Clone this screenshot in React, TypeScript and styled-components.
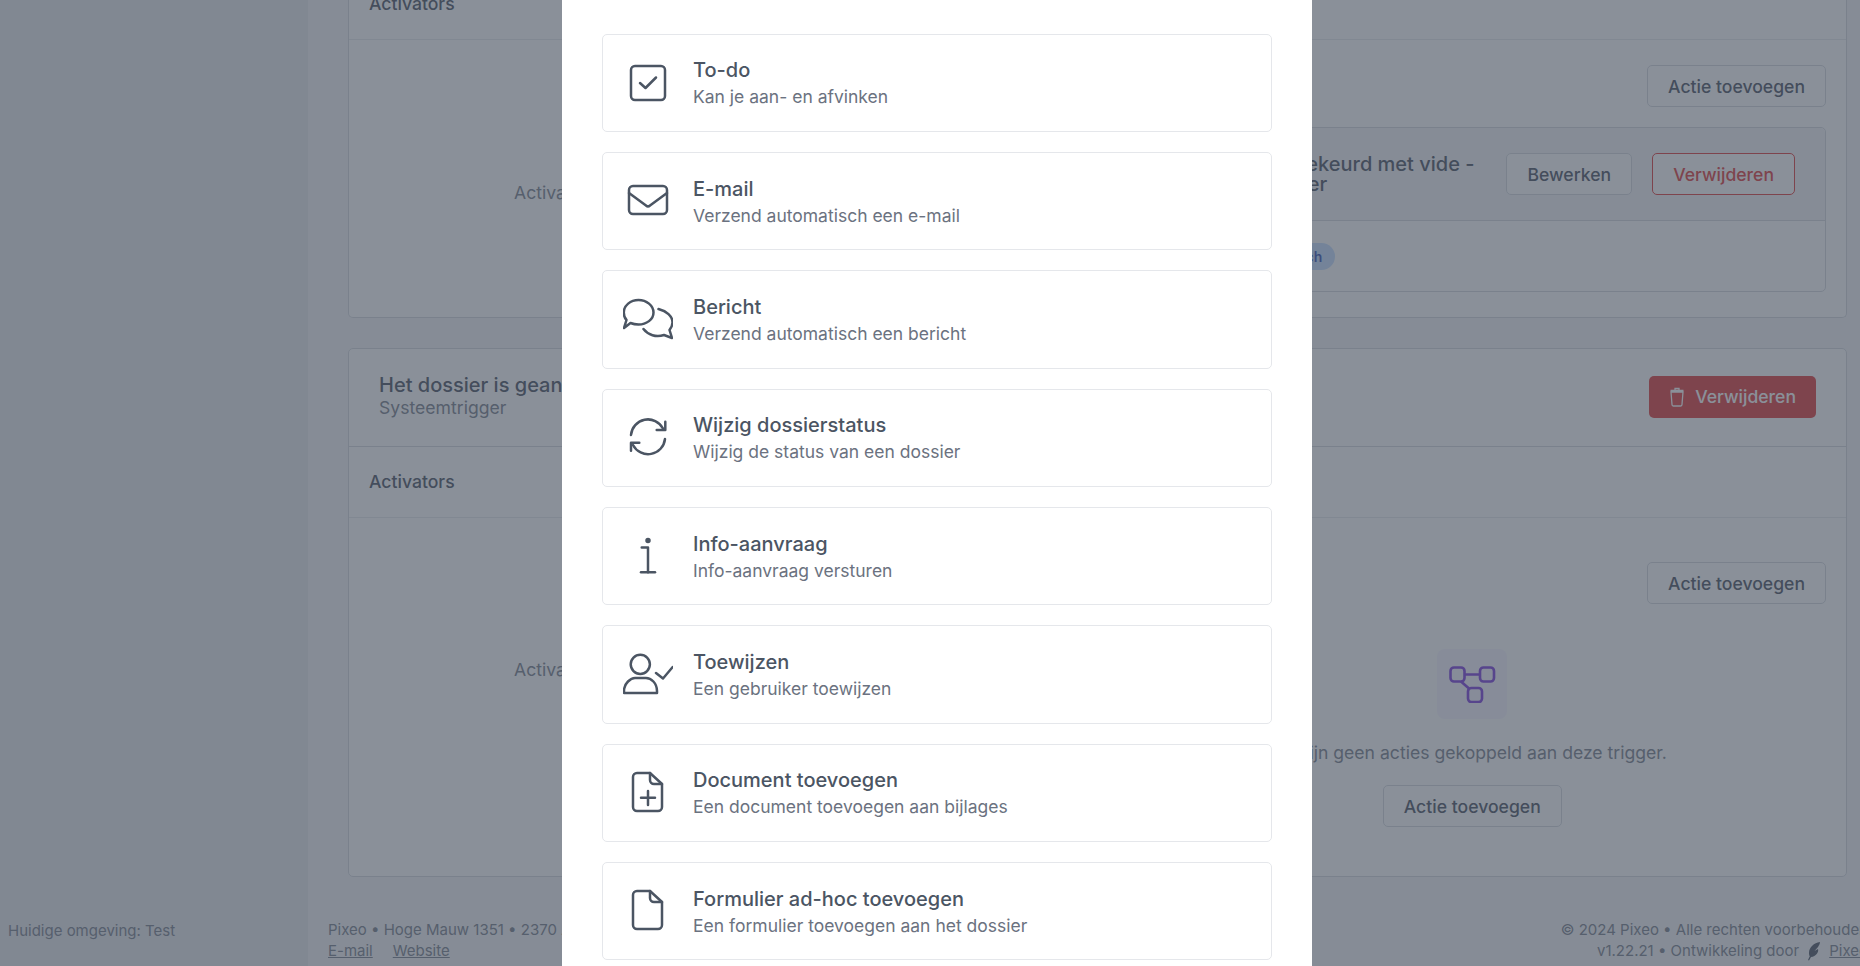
import styled, { createGlobalStyle } from 'styled-components';

const GlobalStyle = createGlobalStyle`
  html, body {
    margin: 0;
    padding: 0;
    height: 100%;
    overflow: hidden;
    background: #f3f4f6;
  }

  body {
    font-family: Inter, "Liberation Sans", sans-serif;
    color: #374151;
  }
`;

interface ActionType {
  title: string;
  description: string;
  icon: React.ReactNode;
}

const actionTypes: ActionType[] = [
  {
    title: 'To-do',
    description: 'Kan je aan- en afvinken',
    icon: (
      <>
        <rect x="8" y="8" width="34" height="34" rx="4" />
        <path d="M17 25l5.500 5L33 19.500" />
      </>
    ),
  },
  {
    title: 'E-mail',
    description: 'Verzend automatisch een e-mail',
    icon: (
      <>
        <rect x="6" y="10" width="38" height="28" rx="4" />
        <path d="M6 17l17 12.500a3 3 0 0 0 4 0L44 17" />
      </>
    ),
  },
  {
    title: 'Bericht',
    description: 'Verzend automatisch een bericht',
    icon: (
      <>
        <path d="M15.500 5C23.500 5 30.500 10.500 30.500 17.500S23.500 29.500 15.500 29.500C12.500 29.500 10 29 7.500 28L1 33l2.500-8C1.500 23 .8 20 .8 17.500.8 10.500 7.500 5 15.500 5Z" />
        <path d="M35.500 14C43.500 16 49.500 21 49.500 27.500c0 3-1.500 5.500-3 7.500l2.500 8-8-3c-8 2.500-16 0-20.500-6" />
      </>
    ),
  },
  {
    title: 'Wijzig dossierstatus',
    description: 'Wijzig de status van een dossier',
    icon: (
      <>
        <path d="M8 22A17 17 0 0 1 40 15.500" />
        <path d="M42.300 8.700V17h-8.600" />
        <path d="M42 26A17 17 0 0 1 10 32" />
        <path d="M8 37.700v-8h8.300" />
      </>
    ),
  },
  {
    title: 'Info-aanvraag',
    description: 'Info-aanvraag versturen',
    icon: (
      <>
        <circle cx="25" cy="9.500" r="1.500" fill="#4b5563" />
        <path d="M18.700 16.500H25v24.700" />
        <path d="M18 41.200h14" />
      </>
    ),
  },
  {
    title: 'Toewijzen',
    description: 'Een gebruiker toewijzen',
    icon: (
      <>
        <circle cx="17.300" cy="14.300" r="9.600" />
        <path d="M1 41c0-8 7-13 11-13h11c5 0 11 5 11 13v2H1Z" />
        <path d="M33 23l7 5.500L49.700 17" />
      </>
    ),
  },
  {
    title: 'Document toevoegen',
    description: 'Een document toevoegen aan bijlages',
    icon: (
      <>
        <path d="M14 5h13l12 11v23a4 4 0 0 1-4 4H14a4 4 0 0 1-4-4V9a4 4 0 0 1 4-4Z" />
        <path d="M27 5v7a4 4 0 0 0 4 4h8" />
        <path d="M18 29.800h14M25 23v14" />
      </>
    ),
  },
  {
    title: 'Formulier ad-hoc toevoegen',
    description: 'Een formulier toevoegen aan het dossier',
    icon: (
      <>
        <path d="M14 5h13l12 11v23a4 4 0 0 1-4 4H14a4 4 0 0 1-4-4V9a4 4 0 0 1 4-4Z" />
        <path d="M27 5v7a4 4 0 0 0 4 4h8" />
      </>
    ),
  },
];

export default function App() {
  return (
    <>
      <GlobalStyle />
      <Page>
        <Sidebar>
          <Environment>Huidige omgeving: Test</Environment>
        </Sidebar>
        <Main>
          <Content>
            <TriggerCard>
              <SectionRow>Activators</SectionRow>
              <Columns>
                <ActivatorColumn $top={141}>Activators</ActivatorColumn>
                <ActionColumn>
                  <ActionsHead>
                    <Button>Actie toevoegen</Button>
                  </ActionsHead>
                  <ActionCard>
                    <ActionCardHead>
                      <ActionCardTitle>
                        Goedgekeurd met vide -<br />
                        manager
                      </ActionCardTitle>
                      <Button>Bewerken</Button>
                      <Button $danger>Verwijderen</Button>
                    </ActionCardHead>
                    <ActionCardBody>
                      <Badge>Automatisch</Badge>
                    </ActionCardBody>
                  </ActionCard>
                </ActionColumn>
              </Columns>
            </TriggerCard>

            <TriggerCard $full>
              <TriggerHead>
                <div>
                  <TriggerTitle>Het dossier is geannuleerd</TriggerTitle>
                  <TriggerType>Systeemtrigger</TriggerType>
                </div>
                <DeleteButton>
                  <svg width="18" height="20" viewBox="0 0 18 20" fill="none" stroke="currentColor" strokeWidth="1.300">
                    <path d="M3 5h12l-1 12.500a1.500 1.500 0 0 1-1.500 1.500h-7A1.500 1.500 0 0 1 4 17.500L3 5ZM2.500 3.500h13M7 3.500V1.500h4v2" />
                  </svg>
                  Verwijderen
                </DeleteButton>
              </TriggerHead>
              <SectionRow>Activators</SectionRow>
              <Columns>
                <ActivatorColumn $top={140}>Activators</ActivatorColumn>
                <ActionColumn $spaced>
                  <ActionsHead>
                    <Button>Actie toevoegen</Button>
                  </ActionsHead>
                  <EmptyState>
                    <EmptyIcon>
                      <svg width="48" height="38" viewBox="0 0 48 38" fill="none" stroke="#6d28d9" strokeWidth="2.600">
                        <rect x="2.500" y="2.500" width="14" height="14" rx="3.500" />
                        <rect x="32" y="2.500" width="14" height="14" rx="3.500" />
                        <rect x="20" y="23" width="14" height="14" rx="3.500" />
                        <path d="M16.500 9.500H32M13 16.500l8 7" />
                      </svg>
                    </EmptyIcon>
                    <EmptyText>Er zijn geen acties gekoppeld aan deze trigger.</EmptyText>
                    <Button>Actie toevoegen</Button>
                  </EmptyState>
                </ActionColumn>
              </Columns>
            </TriggerCard>
          </Content>

          <Footer>
            <div>
              <FooterLine>Pixeo • Hoge Mauw 1351 • 2370 Arendonk</FooterLine>
              <FooterLine>
                <FooterLink>E-mail</FooterLink>
                <FooterLink>Website</FooterLink>
              </FooterLine>
            </div>
            <FooterRight>
              <FooterLine>© 2024 Pixeo • Alle rechten voorbehouden</FooterLine>
              <FooterLine>
                v1.22.21 • Ontwikkeling door
                <svg width="14" height="20" viewBox="0 0 14 20" fill="#374151">
                  <path d="M13 1C7 2 2 6 2 12c0 1.500.3 2.500.8 3.300L1 19l1 .5 2-3.500c5-.5 8-5 7-8l-3.500 2L11 6c1-1.500 1.800-3 2-5Z" />
                </svg>
                <FooterLink>Pixeo</FooterLink>
              </FooterLine>
            </FooterRight>
          </Footer>
        </Main>

        <Overlay>
          <Panel>
            <ActionList>
              {actionTypes.map((a) => (
                <ActionItem key={a.title}>
                  <ItemIcon viewBox="0 0 50 50">{a.icon}</ItemIcon>
                  <div>
                    <ItemTitle>{a.title}</ItemTitle>
                    <ItemDescription>{a.description}</ItemDescription>
                  </div>
                </ActionItem>
              ))}
            </ActionList>
          </Panel>
        </Overlay>
      </Page>
    </>
  );
}

const Page = styled.div`
  display: flex;
  width: 1860px;
  height: 966px;
  overflow: hidden;
`;

const Sidebar = styled.aside`
  flex: 0 0 308px;
  display: flex;
  flex-direction: column;
  justify-content: flex-end;
  background: #e5e7eb;
  padding: 0 0 24px 8px;
  box-sizing: border-box;
`;

const Environment = styled.div`
  font-size: 15px;
  line-height: 22px;
  color: #6b7280;
`;

const Main = styled.main`
  flex: 1;
  min-width: 0;
  background: #f3f4f6;
`;

const Content = styled.div`
  display: flex;
  flex-direction: column;
  gap: 30px;
  margin-top: -31px;
  padding: 0 13px 0 40px;
`;

const TriggerCard = styled.section<{ $full?: boolean }>`
  background: #fff;
  border: 1px solid #d1d5db;
  border-top-width: ${(p) => (p.$full ? '1px' : '0')};
  border-radius: 5px;
`;

const TriggerHead = styled.div`
  display: flex;
  align-items: center;
  justify-content: space-between;
  height: 98px;
  padding: 0 30px 3px;
  box-sizing: border-box;
  border-bottom: 1px solid #d1d5db;
`;

const TriggerTitle = styled.div`
  font-size: 20px;
  line-height: 23px;
  font-weight: 500;
  color: #374151;
`;

const TriggerType = styled.div`
  font-size: 17.600px;
  line-height: 22px;
  color: #6b7280;
`;

const DeleteButton = styled.button`
  display: inline-flex;
  align-items: center;
  gap: 9px;
  height: 42px;
  padding: 0 20px 0 19px;
  margin-top: 1px;
  border: 0;
  border-radius: 5px;
  background: #dc2626;
  color: #fff;
  font: 500 17.600px Inter, sans-serif;
`;

const SectionRow = styled.div`
  display: flex;
  align-items: center;
  height: 71px;
  padding: 0 20px 1px;
  box-sizing: border-box;
  border-bottom: 1px solid #e5e7eb;
  font-size: 17.600px;
  font-weight: 500;
  color: #374151;
`;

const Columns = styled.div`
  display: grid;
  grid-template-columns: 1fr 1fr;
`;

const ActivatorColumn = styled.div<{ $top: number }>`
  padding: ${(p) => p.$top}px 0 0 165px;
  font-size: 17.600px;
  line-height: 24px;
  color: #6b7280;
`;

const ActionColumn = styled.div<{ $spaced?: boolean }>`
  display: flex;
  flex-direction: column;
  padding: ${(p) => (p.$spaced ? '44px 20px 49px' : '25px 20px')};
  min-width: 0;
`;

const ActionsHead = styled.div`
  display: flex;
  justify-content: flex-end;
`;

const Button = styled.button<{ $danger?: boolean }>`
  flex: none;
  height: 42px;
  padding: 0 20px;
  background: #fff;
  border: 1px solid ${(p) => (p.$danger ? '#dc2626' : '#d1d5db')};
  border-radius: 5px;
  color: ${(p) => (p.$danger ? '#dc2626' : '#374151')};
  font: 500 17.600px Inter, sans-serif;
`;

const ActionCard = styled.div`
  margin-top: 20px;
  border: 1px solid #d1d5db;
  border-radius: 5px;
`;

const ActionCardHead = styled.div`
  display: flex;
  align-items: center;
  justify-content: flex-end;
  gap: 20px;
  height: 93px;
  padding: 0 30px 0 25px;
  background: #f3f4f6;
  border-bottom: 1px solid #d1d5db;
  box-sizing: border-box;
  border-radius: 5px 5px 0 0;
`;

const ActionCardTitle = styled.div`
  margin-right: 12px;
  font-size: 20px;
  line-height: 20px;
  font-weight: 500;
  color: #374151;
`;

const ActionCardBody = styled.div`
  display: flex;
  align-items: center;
  height: 70px;
  padding-left: 105px;
`;

const Badge = styled.span`
  padding: 0 13px;
  height: 27px;
  line-height: 27px;
  border-radius: 14px;
  background: #bfdbfe;
  color: #1e40af;
  font-size: 14px;
  font-weight: 600;
`;

const EmptyState = styled.div`
  display: flex;
  flex-direction: column;
  align-items: center;
  margin-top: 45px;
  padding-left: 1px;
`;

const EmptyIcon = styled.div`
  display: flex;
  align-items: center;
  justify-content: center;
  width: 70px;
  height: 70px;
  border-radius: 8px;
  background: #f5f3ff;
`;

const EmptyText = styled.div`
  margin: 20px 0 18px;
  font-size: 17.600px;
  line-height: 28px;
  color: #6b7280;
`;

const Footer = styled.footer`
  display: flex;
  justify-content: space-between;
  margin: 42px -8px 0 0;
  padding: 0 0 0 20px;
`;

const FooterRight = styled.div`
  text-align: right;
`;

const FooterLine = styled.div`
  display: flex;
  align-items: center;
  gap: 20px;
  height: 21px;
  font-size: 15px;
  color: #6b7280;

  ${FooterRight} & {
    gap: 8px;
    justify-content: flex-end;
  }
`;

const FooterLink = styled.a`
  color: #6b7280;
  text-decoration: underline;
`;

const Overlay = styled.div`
  position: fixed;
  inset: 0;
  display: flex;
  justify-content: center;
  background: rgba(75, 85, 99, 0.65);
`;

const Panel = styled.div`
  flex: 0 0 750px;
  margin-left: 14px;
  padding: 33.900px 40px 0;
  box-sizing: border-box;
  background: #fff;
  overflow: hidden;
`;

const ActionList = styled.div`
  display: flex;
  flex-direction: column;
  gap: 20px;
`;

const ActionItem = styled.div`
  display: flex;
  align-items: center;
  gap: 20px;
  flex: none;
  height: 98.300px;
  padding: 1.400px 20px 0;
  box-sizing: border-box;
  background: #fff;
  border: 1px solid #e5e7eb;
  border-radius: 5px;
`;

const ItemIcon = styled.svg`
  flex: none;
  width: 50px;
  height: 50px;
  margin-top: -1.400px;
  fill: none;
  stroke: #4b5563;
  stroke-width: 2.500;
  stroke-linecap: round;
  stroke-linejoin: round;
`;

const ItemTitle = styled.div`
  font-size: 20px;
  line-height: 28px;
  font-weight: 500;
  color: #4b5563;
`;

const ItemDescription = styled.div`
  font-size: 17.500px;
  line-height: 26.560px;
  color: #6b7280;
`;
